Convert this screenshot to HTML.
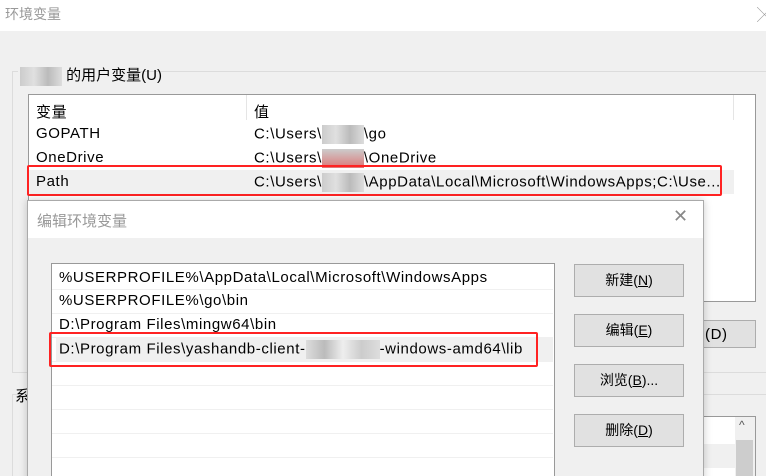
<!DOCTYPE html>
<html><head><meta charset="utf-8"><style>
*{margin:0;padding:0;box-sizing:border-box}
html,body{width:766px;height:476px;overflow:hidden}
body{background:#f0f0f0;font-family:"Liberation Sans","Noto Sans CJK SC",sans-serif;font-size:15px;letter-spacing:.6px;color:#000;position:relative}
.a{position:absolute;white-space:nowrap}
.b{display:inline-block;vertical-align:middle;height:19px;background:linear-gradient(90deg,#ccc,#e0e0e0,#bbb,#ddd)}
.btn{position:absolute;left:574px;width:110px;height:33px;background:#e1e1e1;border:1px solid #adadad;text-align:center;line-height:31px;font-size:14px;letter-spacing:0}
.row{position:absolute;left:52px;width:501px;height:1px;background:#f0f0f0}
</style></head><body>
<div class="a" style="left:0;top:0;width:766px;height:31px;background:#fff"></div>
<div class="a" style="left:5px;top:4px;color:#999;font-size:14px;letter-spacing:0">环境变量</div>
<div class="a" style="left:757px;top:4px;color:#999">╳</div>
<div class="a" style="left:12px;top:71px;width:760px;height:302px;border:1px solid #dcdcdc"></div>
<div class="a" style="left:18px;top:63px;width:120px;height:18px;background:#f0f0f0"></div>
<div class="a" style="left:20px;top:64px;letter-spacing:0"><span class="b" style="width:42px"></span> 的用户变量(U)</div>
<div class="a" style="left:28px;top:94px;width:728px;height:208px;background:#fff;border:1px solid #999"></div>
<div class="a" style="left:246px;top:95px;width:1px;height:25px;background:#e5e5e5"></div>
<div class="a" style="left:733px;top:95px;width:1px;height:25px;background:#e5e5e5"></div>
<div class="a" style="left:36px;top:101px">变量</div>
<div class="a" style="left:254px;top:101px">值</div>
<div class="a" style="left:36px;top:125px">GOPATH</div>
<div class="a" style="left:254px;top:125px">C:\Users\<span class="b" style="width:42px"></span>\go</div>
<div class="a" style="left:36px;top:149px">OneDrive</div>
<div class="a" style="left:254px;top:149px">C:\Users\<span class="b" style="width:42px;background:linear-gradient(#ccc,#d77)"></span>\OneDrive</div>
<div class="a" style="left:29px;top:170px;width:705px;height:24px;background:#f0f0f0"></div>
<div class="a" style="left:36px;top:173px">Path</div>
<div class="a" style="left:254px;top:173px">C:\Users\<span class="b" style="width:42px"></span>\AppData\Local\Microsoft\WindowsApps;C:\Use...</div>
<div class="a" style="left:27px;top:165px;width:695px;height:31px;border:2px solid #f22;border-radius:2px"></div>
<div class="a" style="left:690px;top:320px;width:66px;height:28px;background:#e1e1e1;border:1px solid #adadad"></div>
<div class="a" style="left:705px;top:326px">(D)</div>
<div class="a" style="left:12px;top:394px;width:760px;height:90px;border:1px solid #dcdcdc"></div>
<div class="a" style="left:18px;top:386px;width:14px;height:18px;background:#f0f0f0"></div>
<div class="a" style="left:15px;top:385px">系</div>
<div class="a" style="left:690px;top:416px;width:66px;height:70px;background:#fff;border:1px solid #999"></div>
<div class="a" style="left:691px;top:444px;width:44px;height:24px;background:#f0f0f0"></div>
<div class="a" style="left:735px;top:417px;width:20px;height:60px;background:#f0f0f0"></div>
<div class="a" style="left:736px;top:440px;width:17px;height:40px;background:#cdcdcd"></div>
<div class="a" style="left:739px;top:418px;font-size:12px;color:#555">^</div>
<div class="a" style="left:27px;top:200px;width:677px;height:290px;background:#f0f0f0;border:1px solid #aaa;box-shadow:0 0 8px rgba(0,0,0,.2)"></div>
<div class="a" style="left:28px;top:201px;width:675px;height:37px;background:#fff"></div>
<div class="a" style="left:37px;top:210px;color:#999;letter-spacing:0">编辑环境变量</div>
<div class="a" style="left:673px;top:206px;color:#888;font-size:18px">✕</div>
<div class="a" style="left:51px;top:263px;width:504px;height:220px;background:#fff;border:1px solid #999"></div>
<div class="row" style="top:289px"></div><div class="row" style="top:313px"></div><div class="row" style="top:337px"></div><div class="row" style="top:361px"></div><div class="row" style="top:385px"></div><div class="row" style="top:409px"></div><div class="row" style="top:433px"></div><div class="row" style="top:457px"></div>
<div class="a" style="left:56px;top:337px;width:497px;height:24px;background:#f0f0f0"></div>
<div class="a" style="left:59px;top:269px">%USERPROFILE%\AppData\Local\Microsoft\WindowsApps</div>
<div class="a" style="left:59px;top:292px">%USERPROFILE%\go\bin</div>
<div class="a" style="left:59px;top:316px">D:\Program Files\mingw64\bin</div>
<div class="a" style="left:59px;top:340px">D:\Program Files\yashandb-client-<span class="b" style="width:74px;background:linear-gradient(90deg,#ddd,#bbb,#eee,#ccc,#ddd)"></span>-windows-amd64\lib</div>
<div class="a" style="left:49px;top:332px;width:489px;height:35px;border:2px solid #f22;border-radius:2px"></div>
<div class="btn" style="top:264px">新建(<u>N</u>)</div>
<div class="btn" style="top:314px">编辑(<u>E</u>)</div>
<div class="btn" style="top:364px">浏览(<u>B</u>)...</div>
<div class="btn" style="top:414px">删除(<u>D</u>)</div>
</body></html>
